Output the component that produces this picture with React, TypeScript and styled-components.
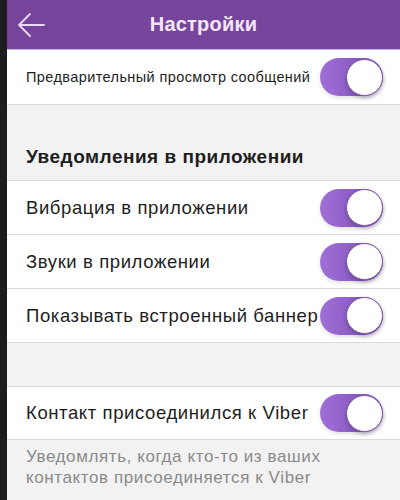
import React from "react";
import styled, { createGlobalStyle } from "styled-components";

const Global = createGlobalStyle`
  html, body { margin: 0; padding: 0; background: #1c1c1c; }
  body { font-family: "Liberation Sans", Arial, sans-serif; }
`;

const Frame = styled.div`
  width: 400px;
  height: 500px;
  overflow: hidden;
  display: flex;
  background: #1c1c1c;
`;

const Edge = styled.div`
  width: 7px;
  flex: none;
  background: #1d1d1d;
`;

const Screen = styled.div`
  flex: 1;
  display: flex;
  flex-direction: column;
  background: #f2f2f2;
`;

const Header = styled.header`
  height: 49px;
  flex: none;
  background: #76449a;
  border-bottom: 1px solid #c9b3d8;
  display: grid;
  grid-template-columns: 60px 1fr 60px;
  align-items: center;
`;

const Back = styled.div`
  padding-left: 10px;
  display: flex;
  align-items: center;
`;

const Title = styled.h1`
  margin: 0;
  text-align: center;
  font-size: 20px;
  font-weight: 700;
  color: #f3e7f9;
  letter-spacing: 0.2px;
`;

const Row = styled.div<{ $h: number }>`
  height: ${(p) => p.$h}px;
  background: #fff;
  border-bottom: 1px solid #d9d9d9;
  display: flex;
  align-items: center;
  justify-content: space-between;
  padding: 0 17px 0 19px;
  box-sizing: border-box;
`;

const Label = styled.span<{ $size: number; $ls: number }>`
  font-size: ${(p) => p.$size}px;
  letter-spacing: ${(p) => p.$ls}px;
  color: #1e1e1e;
  white-space: nowrap;
`;

const Gap = styled.div<{ $h: number }>`
  height: ${(p) => p.$h}px;
  border-bottom: 1px solid #d9d9d9;
  box-sizing: border-box;
  display: flex;
  align-items: flex-end;
  padding: 0 19px 12px;
`;

const Heading = styled.h2`
  margin: 0;
  font-size: 19px;
  letter-spacing: 0.5px;
  font-weight: 700;
  color: #1e1e1e;
`;

const Note = styled.p`
  margin: 0;
  padding: 6px 19px 0;
  font-size: 17px;
  letter-spacing: 0.6px;
  line-height: 21px;
  color: #8a8a8a;
`;

const Track = styled.div`
  width: 63px;
  height: 38px;
  flex: none;
  border-radius: 19px;
  background: linear-gradient(90deg, #a06fd6 0%, #8a5bc4 60%, #7a4cb0 100%);
  display: flex;
  align-items: center;
  justify-content: flex-end;
  box-shadow: 0 2px 4px rgba(0, 0, 0, 0.12);
`;

const Knob = styled.div`
  width: 35px;
  height: 35px;
  border-radius: 50%;
  background: #fff;
  border: 1px solid #7a55a3;
  box-shadow: 0 2px 4px rgba(60, 30, 90, 0.35);
`;

const Toggle = () => (
  <Track>
    <Knob />
  </Track>
);

export default function App() {
  return (
    <>
      <Global />
      <Frame>
        <Edge />
        <Screen>
          <Header>
            <Back>
              <svg width="28" height="26" viewBox="0 0 28 26" fill="none">
                <path d="M27 13H2M13 2L2 13l11 11" stroke="#e9d9f3" strokeWidth="1.8" strokeLinecap="round" strokeLinejoin="round" />
              </svg>
            </Back>
            <Title>Настройки</Title>
            <div />
          </Header>
          <Row $h={55}>
            <Label $size={14.5} $ls={0.4}>Предварительный просмотр сообщений</Label>
            <Toggle />
          </Row>
          <Gap $h={76}>
            <Heading>Уведомления в приложении</Heading>
          </Gap>
          <Row $h={54}>
            <Label $size={18.5} $ls={0.6}>Вибрация в приложении</Label>
            <Toggle />
          </Row>
          <Row $h={54}>
            <Label $size={18.5} $ls={0.6}>Звуки в приложении</Label>
            <Toggle />
          </Row>
          <Row $h={54}>
            <Label $size={18.5} $ls={0.6}>Показывать встроенный баннер</Label>
            <Toggle />
          </Row>
          <Gap $h={44} />
          <Row $h={53}>
            <Label $size={18.5} $ls={0.6}>Контакт присоединился к Viber</Label>
            <Toggle />
          </Row>
          <Note>
            Уведомлять, когда кто-то из ваших
            <br />
            контактов присоединяется к Viber
          </Note>
        </Screen>
      </Frame>
    </>
  );
}
